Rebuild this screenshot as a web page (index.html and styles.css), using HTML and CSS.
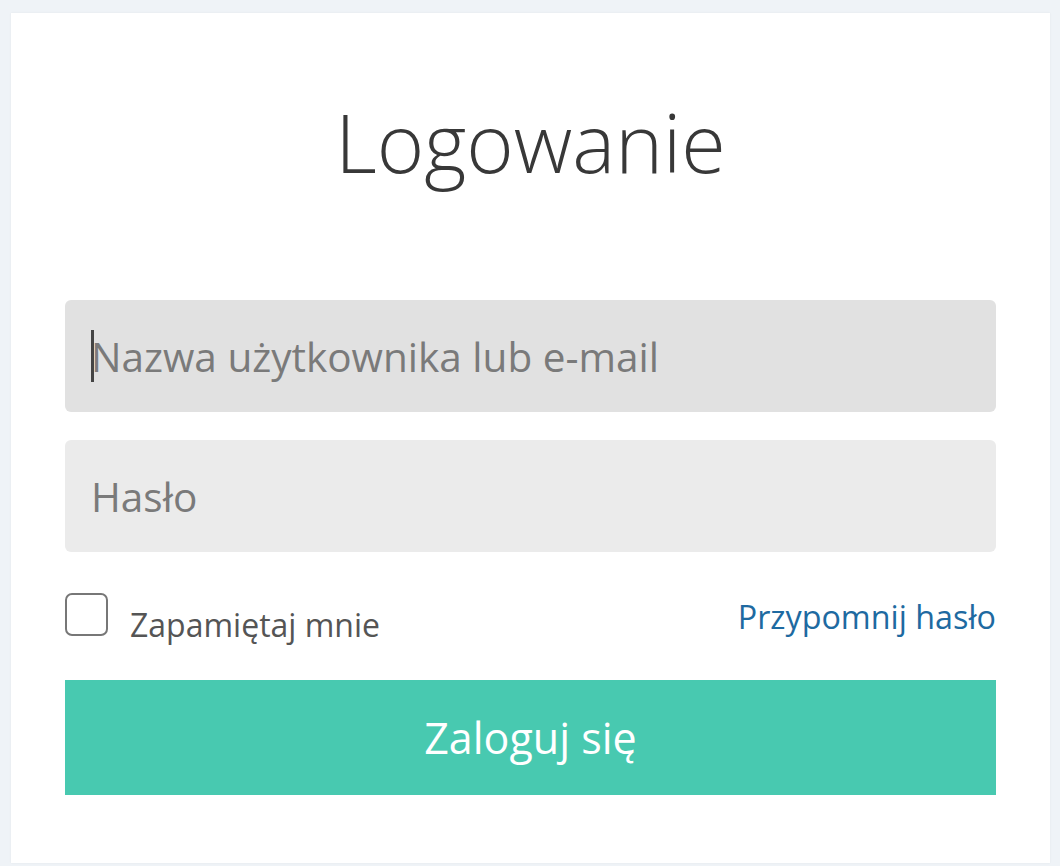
FILE: index.html
```html
<!DOCTYPE html>
<html lang="pl">
<head>
<meta charset="utf-8">
<title>Logowanie</title>
<link rel="stylesheet" href="styles.css">
</head>
<body>
<main class="card">
  <h1 class="title">Logowanie</h1>
  <form class="form">
    <div class="field field-focus">
      <span class="caret"></span>
      <input class="input input-active" type="text" placeholder="Nazwa użytkownika lub e-mail">
    </div>
    <div class="field">
      <input class="input" type="password" placeholder="Hasło">
    </div>
    <div class="options">
      <label class="remember">
        <span class="box"></span>
        <span class="remember-text">Zapamiętaj mnie</span>
      </label>
      <a class="forgot" href="#">Przypomnij hasło</a>
    </div>
    <button class="submit" type="button">Zaloguj się</button>
  </form>
</main>
</body>
</html>
```

FILE: styles.css
```css
* { box-sizing: border-box; }
html, body { margin: 0; padding: 0; }
body {
  background: #eff3f7;
  font-family: "Open Sans", "Noto Sans", sans-serif;
  padding: 13px 10px 0 11px;
  height: 866px;
  overflow: hidden;
}
.card {
  background: #ffffff;
  box-shadow: 0 0 2px rgba(0,0,0,0.06);
  padding: 79px 54px 68px 54px;
}
.title {
  margin: 0;
  font-weight: 300;
  font-size: 81px;
  line-height: 100px;
  color: #383838;
  text-align: center;
}
.form {
  margin-top: 108px;
  display: flex;
  flex-direction: column;
}
.field {
  position: relative;
  margin-bottom: 28px;
}
.input {
  display: block;
  width: 100%;
  height: 112px;
  border: none;
  border-radius: 6px;
  background: #ebebeb;
  padding: 0 26px;
  font-family: "Open Sans", "Noto Sans", sans-serif;
  font-size: 40.5px;
  color: #555;
  outline: none;
}
.input-active { background: #e1e1e1; }
.input::placeholder { color: #7a7a7a; opacity: 1; }
.caret {
  position: absolute;
  left: 26px;
  top: 30px;
  width: 3px;
  height: 52px;
  background: #444;
}
.options {
  display: flex;
  justify-content: space-between;
  align-items: flex-start;
  margin-top: 13px;
  height: 87px;
}
.remember {
  display: flex;
  align-items: flex-start;
  gap: 22px;
}
.box {
  width: 43px;
  height: 43px;
  border: 2.5px solid #777;
  border-radius: 7px;
}
.remember-text {
  font-size: 32px;
  line-height: 40px;
  color: #555;
  margin-top: 12px;
}
.forgot {
  font-size: 32.3px;
  line-height: 40px;
  color: #1e6aa1;
  text-decoration: none;
  margin-top: 3px;
}
.submit {
  height: 115px;
  border: none;
  background: #48c9b0;
  color: #ffffff;
  font-family: "Open Sans", "Noto Sans", sans-serif;
  font-size: 43px;
  padding: 0;
}
```
